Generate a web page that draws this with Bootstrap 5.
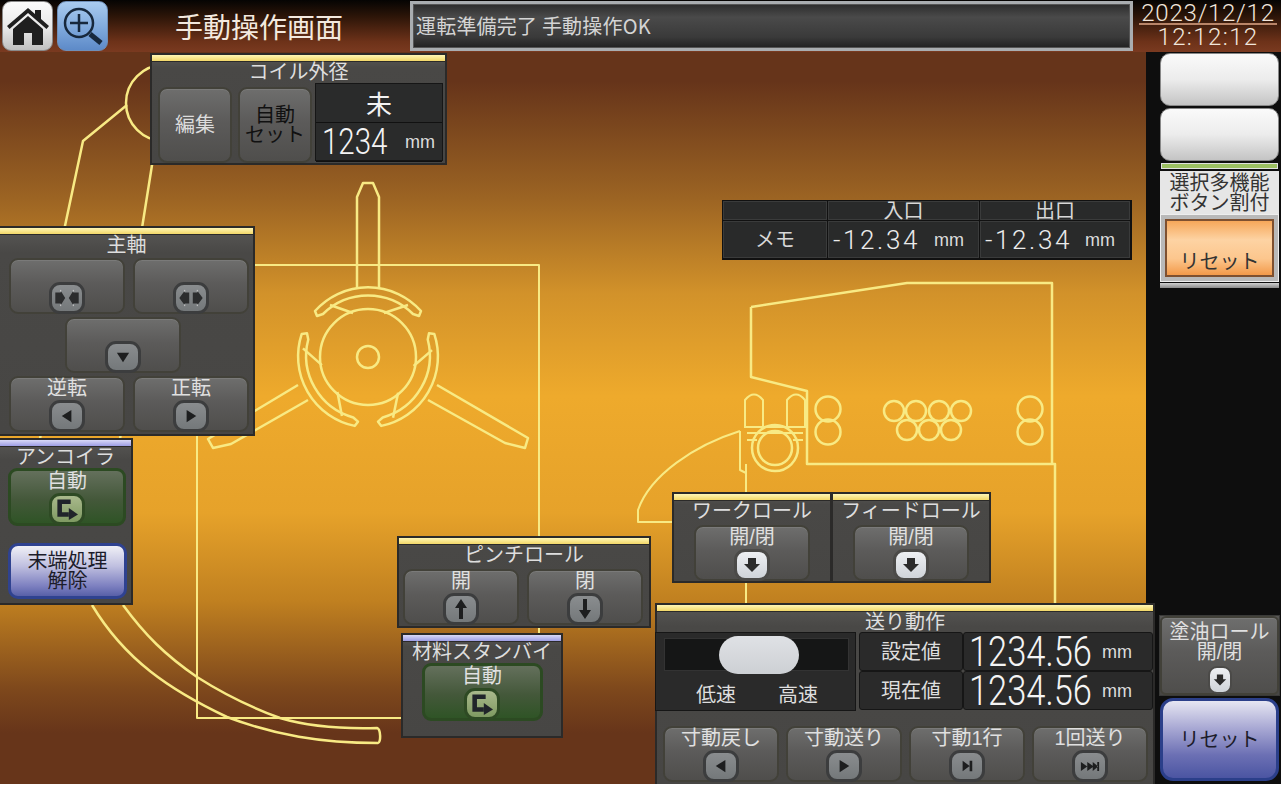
<!DOCTYPE html>
<html lang="ja">
<head>
<meta charset="UTF-8" />
<title>手動操作画面</title>
<link href="https://cdn.jsdelivr.net/npm/bootstrap@5.3.3/dist/css/bootstrap.min.css" rel="stylesheet">
<style>
  body { background: #fff; font-family: "Liberation Sans", "Noto Sans CJK JP", sans-serif; }
  .hmi { position: relative; width: 1281px; height: 784px; overflow: hidden; font-size: 20px; line-height: 1; color: #dedede; }

  /* header */
  .topbar { height: 52px; background: linear-gradient(#050403 0, #2a1408 30%, #6d3219 80%, #7a3a20 100%); }
  .icon-key { width: 51px; height: 50px; margin: 1px 0 0 2px; padding: 0; border: 1px solid #8a8a8a; border-radius: 9px; background: linear-gradient(#fbfbfb, #e8e8e8 55%, #bfbfbf); }
  .icon-key.zoomkey { margin-left: 4px; background: linear-gradient(#a9cbef, #7fa9dc 55%, #5d8ac8); border-color: #6f8fb8; }
  .screen-name { width: 302px; font-size: 28px; color: #f3e9df; text-align: center; font-family: "Noto Sans CJK JP", sans-serif; }
  .status-msg { width: 723px; height: 50px; margin: 1px 0 0 0; border: 3px solid #a9adb0; outline: 1px solid #555; outline-offset: -4px; padding-left: 3px; background: linear-gradient(#2c2c2c, #4a4a4a 30%, #3a3a3a 75%, #202020); color: #d4d4d4; letter-spacing: .2px; }
  .status-msg span { font-family: "Noto Sans CJK JP", sans-serif; }
  .clock { width: 148px; padding: 0 4px 0 6px; color: #f2e6dc; font: 300 24px/1 Roboto, sans-serif; text-align: center; }
  .clock .clk-date { height: 25px; padding-top: 3px; line-height: 20px; border-bottom: 2px solid #b98568; white-space: nowrap; letter-spacing: .8px; }
  .clock .clk-time { margin-top: 1px; line-height: 22px; letter-spacing: 1.4px; }

  /* main area */
  .workarea { height: 732px; }
  .canvas { width: 1146px; background: linear-gradient(#66341a 0, #66341a 4%, #9c6423 20%, #d2922a 33%, #eeaa2c 47%, #e6a22a 63%, #c08020 75%, #7e481c 87%, #67351a 93%, #67351a 100%); }
  .canvas svg { display: block; }
  .side { width: 135px; padding: 1px 2px 3px 14px; background: #0e0e0e; }
  .whitekey { height: 53px; margin-bottom: 2px; border-radius: 10px; border: 1px solid #888; background: linear-gradient(#fafafa, #ececec 50%, #c4c4c4); }
  .lamp { height: 6px; margin: 0 1px 2px; border: 1px solid #e0e0e0; background: #9cc062; }
  .assign-label { height: 43px; background: #e6e6e6; color: #333; display: flex; flex-direction: column; justify-content: center; text-align: center; line-height: 20px; }
  .assign-frame { height: 68px; padding: 4px; background: #b9b9b9; border: 1px solid #eee; }
  .assign-reset { height: 100%; border: 2px solid #7e5030; background: linear-gradient(#f6a75a, #fdd3a3 35%, #fcc68d 70%, #f39a4a); color: #333; padding-top: 31px; text-align: center; }
  .assign-foot { height: 5px; background: linear-gradient(#d0d0d0, #8a8a8a); margin-top: 1px; }

  /* panels */
  .board { position: absolute; background: linear-gradient(#585755 0, #494846 12%, #474644 100%); border: 2px solid #2b2a29; text-align: center; }
  .board-cap { height: 6px; background: linear-gradient(#fff6b4, #f2d768); box-shadow: 0 1px 0 #2b2a29; }
  .board-cap.cap-blue { background: linear-gradient(#d9d9f7, #9d9de4); }
  .board-title { display: block; height: 21px; padding-top: 2px; line-height: 19px; white-space: nowrap; }
  .b-coil { left: 150px; top: 53px; width: 297px; height: 112px; }
  .b-spindle { left: 0; top: 226px; width: 255px; height: 210px; border-left: 0; }
  .b-uncoil { left: 0; top: 438px; width: 133px; height: 167px; border-left: 0; }
  .b-pinch { left: 397px; top: 536px; width: 254px; height: 92px; }
  .b-standby { left: 401px; top: 633px; width: 162px; height: 105px; }
  .b-work { left: 672px; top: 492px; width: 160px; height: 91px; }
  .b-feed { left: 831px; top: 492px; width: 160px; height: 91px; }
  .b-send { left: 655px; top: 603px; width: 500px; height: 181px; border-bottom: 0; }
  .b-oil { left: 1159px; top: 615px; width: 121px; height: 81px; border-width: 1px; border-color: #3a3a38; }

  .key { display: flex; flex-direction: column; align-items: center; padding: 0; border: 2px solid #424139; border-radius: 9px; width: 116px; height: 56px; color: #e0e0e0; font-size: 20px; line-height: 20px; background: linear-gradient(#6e6e6d, #5c5b5a 45%, #4f4e4c); box-shadow: inset 0 1px 0 #7a7a79; }
  .key:hover, .key:active { color: #e0e0e0; border-color: #424139; background: linear-gradient(#6e6e6d, #5c5b5a 45%, #4f4e4c); }
  .key.key-auto { width: 118px; height: 58px; margin-top: 1px; border: 3px solid #2c4a22; background: linear-gradient(#64705c, #44583a 55%, #2f5426); box-shadow: none; }
  .b-standby .key.key-auto { width: 121px; }
  .chip { display: flex; align-items: center; justify-content: center; width: 36px; height: 32px; margin-top: auto; margin-bottom: -2px; border-radius: 11px; border: 3px solid #3c3d3e; background: linear-gradient(#8a8d8f, #74787a); }
  .chip.chip-white { background: linear-gradient(#eef0f3, #cfd3d9); border-color: #4b4a48; }
  .chip.chip-green { background: linear-gradient(#a9b98c, #7f9a62); border-color: #2e4a24; }
  .chip.oil-chip { width: 24px; height: 28px; border-width: 2px; border-radius: 9px; margin-bottom: -1px; }
  .chip svg { display: block; }

  .coil-row { display: flex; padding-left: 6px; margin-top: 1px; }
  .coil-key { width: 74px; height: 76px; margin: 4px 6px 0 0; justify-content: center; color: #dcdcdc; }
  .coil-key.dark-text, .coil-key.dark-text:hover { color: #111; }
  .coil-vals { width: 128px; margin-left: -3px; height: 78px; background: #2a2b2b; border: 1px solid #161616; }
  .coil-vals > div { height: 39px; display: flex; align-items: center; border-bottom: 1px solid #111; }
  .coil-vals .kanji { width: 100%; font-size: 26px; color: #f2f2f2; font-family: "Noto Sans CJK JP", sans-serif; text-align: center; }
  .coil-vals .coil-num { padding-left: 6px; }
  .bignum { display: inline-block; transform: scaleX(.82); transform-origin: left center; font: 300 36px/36px Roboto, sans-serif; color: #f4f4f4; white-space: nowrap; text-align: left; }
  .coil-num .bignum { width: 83px; }
  .send-val .bignum { width: 128px; font-size: 42px; }
  .unit { font: 400 18px/1 "Liberation Sans", sans-serif; color: #dcdcdc; }

  .spindle-grid { display: grid; grid-template-columns: 116px 116px; column-gap: 8px; row-gap: 3px; justify-content: start; margin-top: 3px; padding-left: 9px; }
  .spindle-grid .mid { grid-column: 1 / 3; margin-left: 56px; }

  .memo { position: absolute; left: 722px; top: 200px; width: 410px; height: 60px; background: #292a2a; border: 1px solid #111; display: grid; grid-template-columns: 105px 152px 151px; grid-template-rows: 20px 38px; color: #d8d8d8; }
  .memo > div { display: flex; align-items: center; justify-content: center; border-right: 1px solid #111; border-bottom: 1px solid #111; box-shadow: inset 0 0 0 1px #3a3b3b; overflow: hidden; white-space: nowrap; }
  .memo .memo-num { justify-content: space-between; padding: 0 15px 0 5px; }
  .memo .num26 { font: 300 26px/1 Roboto, sans-serif; letter-spacing: 2.6px; color: #ececec; }

  .send-row { display: flex; height: 79px; }
  .speed { width: 204px; margin-left: -2px; padding: 5px 6px 0 8px; background: #2a2a2a; border: 1px solid #161616; position: relative; }
  .speed-track { height: 33px; background: #151616; border: 1px solid #333; }
  .speed-thumb { position: absolute; left: 63px; top: 3px; width: 80px; height: 38px; border-radius: 19px; background: linear-gradient(#dfe1e5, #cdd0d4); }
  .speed-labels { display: flex; justify-content: space-between; padding: 14px 31px 0 32px; }
  .send-table { display: grid; grid-template-columns: 104px 190px; grid-template-rows: 39px 39px; margin-left: 3px; }
  .send-table > div { display: flex; align-items: center; justify-content: center; background: #2a2a2a; border: 1px solid #161616; border-radius: 3px; }
  .send-table .send-val { justify-content: flex-start; padding-left: 5px; gap: 5px; }
  .send-keys { display: flex; gap: 7px; margin: 15px 0 0 6px; }
  .key-wide { white-space: nowrap; }

  .resetkey { position: absolute; left: 1160px; top: 698px; width: 119px; height: 83px; padding: 0; border: 3px solid #2b3f8a; border-radius: 13px; background: linear-gradient(#e6e6f2, #a9a9d4 35%, #6c70b4 70%, #4b55a2); color: #1c1c2a; font-size: 20px; }
  .endkey { display: block; width: 119px; height: 56px; padding: 0; margin: 17px 0 0 8px; border: 3px solid #2f4290; border-radius: 10px; background: linear-gradient(#f0f0f6, #c0c0e0 40%, #7d80c0 80%, #5860a8); color: #1c1c2a; font-size: 20px; line-height: 20px; }
</style>
</head>
<body>
<svg width="0" height="0" class="position-absolute">
  <symbol id="i-in" viewBox="0 0 28 20"><path d="M1 4h6V2l5 8-5 8v-2H1zM27 4h-6V2l-5 8 5 8v-2h6z" fill="#2c2d2e"/><path d="M7 1v2M21 1v2M7 17v2M21 17v2" stroke="#d8d8d8"/></symbol>
  <symbol id="i-out" viewBox="0 0 28 20"><path d="M12 4H7V2L1 10l6 8v-2h5zM16 4h5V2l6 8-6 8v-2h-5z" fill="#2c2d2e"/><path d="M7 1v2M21 1v2M7 17v2M21 17v2" stroke="#d8d8d8"/></symbol>
  <symbol id="i-tdown" viewBox="0 0 16 16"><path d="M1 3h14L8 14z" fill="#1d1e1f"/></symbol>
  <symbol id="i-tleft" viewBox="0 0 16 16"><path d="M13 1v14L2 8z" fill="#1d1e1f"/></symbol>
  <symbol id="i-tright" viewBox="0 0 16 16"><path d="M3 1v14l11-7z" fill="#1d1e1f"/></symbol>
  <symbol id="i-skip" viewBox="0 0 16 16"><path d="M3 2v12l8-6zM11 2h3v12h-3z" fill="#1d1e1f"/></symbol>
  <symbol id="i-ffwd" viewBox="0 0 22 14"><path d="M1 2v10l7-5zM8 2v10l7-5zM14 2v10l6-5zM19 2h2v10h-2z" fill="#1d1e1f"/></symbol>
  <symbol id="i-aup" viewBox="0 0 14 22"><path d="M7 1l6 9H9v11H5V10H1z" fill="#1d1e1f"/></symbol>
  <symbol id="i-adown" viewBox="0 0 14 22"><path d="M7 21l6-9H9V1H5v11H1z" fill="#1d1e1f"/></symbol>
  <symbol id="i-thick" viewBox="0 0 18 16"><path d="M5 1h8v6h4l-8 8-8-8h4z" fill="#2b2b2b"/></symbol>
  <symbol id="i-auto" viewBox="0 0 28 24"><path d="M18 4H6v14h10" fill="none" stroke="#20242a" stroke-width="5"/><path d="M16 11l10 7-10 6z" fill="#20242a"/></symbol>
</svg>

<div class="hmi">
  <header class="topbar d-flex align-items-start">
    <button class="btn icon-key" aria-label="ホーム">
      <svg width="44" height="40" viewBox="0 0 44 40" class="d-block mx-auto"><path d="M22 2L1 20l2.5 3L22 7l18.5 16 2.5-3-8-7V4h-6v4z" fill="#1f1f1f"/><path d="M7 23L22 10l15 13v16H26V27h-8v12H7z" fill="#1f1f1f"/></svg>
    </button>
    <button class="btn icon-key zoomkey" aria-label="拡大">
      <svg width="44" height="40" viewBox="0 0 44 40" class="d-block mx-auto"><circle cx="18" cy="17" r="14" fill="none" stroke="#17283c" stroke-width="2.5"/><path d="M18 8v18M9 17h18" stroke="#17283c" stroke-width="2.5"/><path d="M29 28l11 9" stroke="#17283c" stroke-width="5"/></svg>
    </button>
    <div class="screen-name align-self-center">手動操作画面</div>
    <div class="status-msg d-flex align-items-center"><span>運転準備完了 手動操作OK</span></div>
    <div class="clock">
      <div class="clk-date">2023/12/12</div>
      <div class="clk-time">12:12:12</div>
    </div>
  </header>

  <div class="workarea d-flex">
    <div class="canvas">
      <svg width="1146" height="732" viewBox="0 52 1146 732" fill="none" stroke="#f8ea84" stroke-width="2.5" stroke-linejoin="round">
        <!-- coil car -->
        <circle cx="164" cy="103" r="38"/>
        <path d="M127 105L83 141 62 240 40 440M156 140L142 228 120 440"/>
        <path d="M92 605C125 660 170 690 227 717 275 735 320 743 378 743 381 743 381 729 377 728 340 729 310 727 280 718 250 707 222 693 197 677 165 655 145 635 123 605"/>
        <!-- frame -->
        <path stroke-width="2" d="M197 265H539V640M197 265V718H401"/>
        <!-- spindle -->
        <circle cx="368" cy="357" r="48"/>
        <circle cx="368" cy="357" r="11"/>
        <path d="M357 288V197L363 183H373L379 197V288"/>
        <path d="M437 385L528 438 525 448 505 443 428 400"/>
        <path d="M298 385L208 439 213 448 231 444 308 400"/>
        <g id="jaw">
          <path d="M315 311A71 71 0 0 1 421 311L419 316 413 314A64 64 0 0 0 323 314L317 316Z"/>
          <path d="M330 305L353 313M408 305L384 313"/>
        </g>
        <use href="#jaw" transform="rotate(120 368 357)"/>
        <use href="#jaw" transform="rotate(240 368 357)"/>
        <!-- feeder body -->
        <path d="M751 307L907 283H1052V464M751 307V377L807 391V464H1055V603"/>
        <path stroke-width="2" d="M746 464V603M740 431C695 445 650 475 638 510V522H672M740 431V470L746 473"/>
        <path stroke-width="2" d="M745 427V400Q754 389 763 400V427ZM787 427V400Q796 389 805 400V427Z"/>
        <path stroke-width="2" d="M744 427H806M747 433H803M747 440H757M793 440H803"/>
        <circle cx="775" cy="448" r="23"/>
        <circle cx="775" cy="448" r="17"/>
        <circle cx="828" cy="409" r="12.5"/><circle cx="828" cy="432" r="12.5"/>
        <circle cx="1030" cy="409" r="12.5"/><circle cx="1030" cy="432" r="12.5"/>
        <circle cx="894" cy="411" r="10"/><circle cx="916" cy="411" r="10"/><circle cx="939" cy="411" r="10"/><circle cx="961" cy="411" r="10"/>
        <circle cx="907" cy="430" r="10"/><circle cx="929" cy="430" r="10"/><circle cx="951" cy="430" r="10"/>
      </svg>
    </div>
    <aside class="side d-flex flex-column">
      <div class="whitekey"></div>
      <div class="whitekey"></div>
      <div class="lamp"></div>
      <div class="assign-label"><div>選択多機能</div><div>ボタン割付</div></div>
      <div class="assign-frame"><div class="assign-reset">リセット</div></div>
      <div class="assign-foot"></div>
    </aside>
  </div>

  <!-- panels -->
  <section class="board b-coil">
    <div class="board-cap"></div>
    <span class="board-title">コイル外径</span>
    <div class="coil-row">
      <button class="btn key coil-key">編集</button>
      <button class="btn key coil-key dark-text"><span>自動</span><span>セット</span></button>
      <div class="coil-vals">
        <div><span class="kanji">未</span></div>
        <div class="coil-num"><span class="bignum">1234</span><span class="unit">mm</span></div>
      </div>
    </div>
  </section>

  <section class="board b-spindle">
    <div class="board-cap"></div>
    <span class="board-title">主軸</span>
    <div class="spindle-grid">
      <button class="btn key"><span class="chip"><svg width="26" height="18"><use href="#i-in"/></svg></span></button>
      <button class="btn key"><span class="chip"><svg width="26" height="18"><use href="#i-out"/></svg></span></button>
      <button class="btn key mid"><span class="chip"><svg width="14" height="14"><use href="#i-tdown"/></svg></span></button>
      <button class="btn key">逆転<span class="chip"><svg width="14" height="14"><use href="#i-tleft"/></svg></span></button>
      <button class="btn key">正転<span class="chip"><svg width="14" height="14"><use href="#i-tright"/></svg></span></button>
    </div>
  </section>

  <section class="board b-uncoil">
    <div class="board-cap cap-blue"></div>
    <span class="board-title">アンコイラ</span>
    <button class="btn key key-auto ms-2"><span>自動</span><span class="chip chip-green"><svg width="26" height="22"><use href="#i-auto"/></svg></span></button>
    <button class="btn endkey">末端処理<br>解除</button>
  </section>

  <section class="board b-pinch">
    <div class="board-cap"></div>
    <span class="board-title">ピンチロール</span>
    <div class="d-flex ps-1 gap-2 mt-1">
      <button class="btn key">開<span class="chip"><svg width="14" height="22"><use href="#i-aup"/></svg></span></button>
      <button class="btn key">閉<span class="chip"><svg width="14" height="22"><use href="#i-adown"/></svg></span></button>
    </div>
  </section>

  <section class="board b-standby">
    <div class="board-cap cap-blue"></div>
    <span class="board-title">材料スタンバイ</span>
    <button class="btn key key-auto mx-auto"><span>自動</span><span class="chip chip-green"><svg width="26" height="22"><use href="#i-auto"/></svg></span></button>
  </section>

  <section class="board b-work">
    <div class="board-cap"></div>
    <span class="board-title">ワークロール</span>
    <button class="btn key mx-auto mt-1">開/閉<span class="chip chip-white"><svg width="18" height="16"><use href="#i-thick"/></svg></span></button>
  </section>

  <section class="board b-feed">
    <div class="board-cap"></div>
    <span class="board-title">フィードロール</span>
    <button class="btn key mx-auto mt-1">開/閉<span class="chip chip-white"><svg width="18" height="16"><use href="#i-thick"/></svg></span></button>
  </section>

  <div class="memo">
    <div></div>
    <div>入口</div>
    <div>出口</div>
    <div>メモ</div>
    <div class="memo-num"><span class="num26">-12.34</span><span class="unit">mm</span></div>
    <div class="memo-num"><span class="num26">-12.34</span><span class="unit">mm</span></div>
  </div>

  <section class="board b-send">
    <div class="board-cap"></div>
    <span class="board-title">送り動作</span>
    <div class="send-row">
      <div class="speed">
        <div class="speed-track"></div>
        <div class="speed-thumb"></div>
        <div class="speed-labels"><span>低速</span><span>高速</span></div>
      </div>
      <div class="send-table">
        <div>設定値</div>
        <div class="send-val"><span class="bignum">1234.56</span><span class="unit">mm</span></div>
        <div>現在値</div>
        <div class="send-val"><span class="bignum">1234.56</span><span class="unit">mm</span></div>
      </div>
    </div>
    <div class="send-keys">
      <button class="btn key key-wide">寸動戻し<span class="chip"><svg width="14" height="14"><use href="#i-tleft"/></svg></span></button>
      <button class="btn key key-wide">寸動送り<span class="chip"><svg width="14" height="14"><use href="#i-tright"/></svg></span></button>
      <button class="btn key key-wide">寸動1行<span class="chip"><svg width="14" height="14"><use href="#i-skip"/></svg></span></button>
      <button class="btn key key-wide">1回送り<span class="chip"><svg width="20" height="13"><use href="#i-ffwd"/></svg></span></button>
    </div>
  </section>

  <section class="board b-oil">
    <button class="btn key w-100 h-100 rounded-2 pt-1">
      <span>塗油ロール</span><span>開/閉</span>
      <span class="chip chip-white oil-chip"><svg width="14" height="14"><use href="#i-thick"/></svg></span>
    </button>
  </section>

  <button class="btn resetkey">リセット</button>
</div>
<script src="https://cdn.jsdelivr.net/npm/bootstrap@5.3.3/dist/js/bootstrap.bundle.min.js"></script>
</body>
</html>
